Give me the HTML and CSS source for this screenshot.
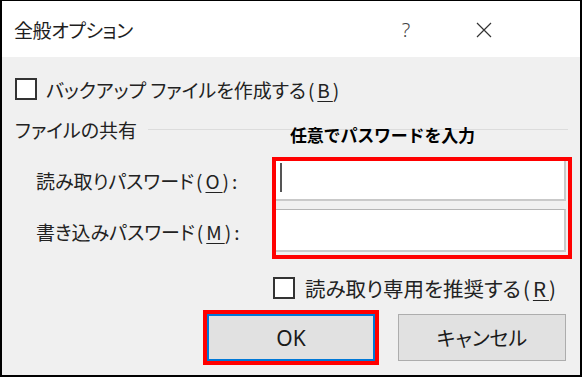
FILE: index.html
```html
<!DOCTYPE html>
<html lang="ja">
<head>
<meta charset="utf-8">
<link rel="stylesheet" href="styles.css">
</head>
<body>
<div class="dialog">
  <div class="titlebar">
    <span class="title">全般オプション</span>
    <span class="help">?</span>
    <span class="close">
      <svg width="16" height="16" viewBox="0 0 16 16"><path d="M1 1 L15 15 M15 1 L1 15" stroke="#333" stroke-width="1.2" fill="none"/></svg>
    </span>
  </div>
  <div class="content">
    <div class="check-row first">
      <span class="checkbox"></span>
      <span class="label">バックアップ ファイルを作成する<span class="key">(<u>B</u>)</span></span>
    </div>
    <div class="group-row">
      <span class="group-title">ファイルの共有</span>
      <span class="group-line"></span>
    </div>
    <div class="note">任意でパスワードを入力</div>
    <div class="pw-grid">
      <div class="pw-labels">
        <div class="pw-label one">読み取りパスワード<span class="key">(<u>O</u>):</span></div>
        <div class="pw-label two">書き込みパスワード<span class="key">(<u>M</u>):</span></div>
      </div>
      <div class="red-box">
        <div class="input one"><span class="caret"></span></div>
        <div class="input two"></div>
      </div>
    </div>
    <div class="check-row second">
      <span class="checkbox"></span>
      <span class="label">読み取り専用を推奨する<span class="key">(<u>R</u>)</span></span>
    </div>
    <div class="buttons">
      <div class="red-wrap"><div class="btn ok">OK</div></div>
      <div class="btn cancel">キャンセル</div>
    </div>
  </div>
</div>
</body>
</html>
```
FILE: styles.css
```css
* { box-sizing: border-box; }
html, body { margin: 0; padding: 0; }
body {
  width: 582px;
  height: 377px;
  overflow: hidden;
  font-family: "Noto Sans CJK JP", "Noto Sans", sans-serif;
  font-feature-settings: "palt";
  color: #222;
}
.dialog {
  width: 582px;
  height: 377px;
  border-left: 2px solid #000;
  border-top: 1px solid #000;
  border-right: 2px solid #000;
  border-bottom: 2px solid #000;
  display: flex;
  flex-direction: column;
  position: relative;
}
.titlebar {
  height: 56px;
  background: #fff;
  display: flex;
  align-items: center;
  padding-left: 12px;
  padding-right: 83px;
  flex-shrink: 0;
}
.title {
  font-size: 19px;
  flex: 1;
  color: #1e1e1e;
  letter-spacing: -0.4px;
}
.help {
  width: 22px;
  text-align: center;
  font-family: "Noto Sans", sans-serif;
  font-size: 20px;
  color: #444;
  margin-right: 53px;
  font-weight: 300;
}
.close {
  width: 27px;
  display: flex;
  justify-content: center;
  padding-top: 2px;
}
.content {
  flex: 1;
  background: #f0f0f0;
  padding-left: 13px;
}
.check-row {
  display: flex;
  align-items: center;
  height: 22px;
  font-size: 19px;
}
.check-row.first { margin-top: 21px; }
.check-row.first .checkbox { margin-right: 9px; }
.check-row.second { margin-top: 18px; margin-left: 258px; }
.check-row.second .checkbox { margin-right: 10px; }
.check-row.second .label { font-size: 20.5px; }
.checkbox {
  width: 22px;
  height: 22px;
  border: 2px solid #333;
  background: #fff;
  flex-shrink: 0;
}
.key { letter-spacing: 3px; margin-left: 2px; }
u { text-decoration-thickness: 1px; text-underline-offset: 3px; }
.group-row {
  display: flex;
  align-items: center;
  height: 22px;
  margin-top: 18px;
  font-size: 19px;
}
.group-line {
  flex: 1;
  height: 1px;
  background: #dcdcdc;
  margin-left: 11px;
  margin-right: 12px;
}
.note {
  position: absolute;
  left: 288px;
  top: 121px;
  font-size: 17px;
  font-weight: 700;
  color: #000;
  font-feature-settings: normal;
  letter-spacing: -0.2px;
}
.pw-grid {
  display: grid;
  grid-template-columns: 257px 300px;
  margin-top: 17px;
}
.pw-labels {
  display: flex;
  flex-direction: column;
  padding-top: 3px;
  padding-left: 21px;
  font-size: 19px;
}
.pw-label { display: flex; align-items: center; }
.pw-label.one { height: 40px; }
.pw-label.two { height: 43px; margin-top: 10px; }
.red-box {
  border: 4px solid #ff0000;
  padding: 0 2px 3px 0;
}
.input {
  background: #fff;
  width: 290px;
  border-right: 2px solid #c9c9c9;
  border-bottom: 2px solid #c9c9c9;
}
.input.one { height: 40px; position: relative; }
.input.two { height: 43px; margin-top: 8px; border-top: 1px solid #b5b5b5; }
.caret {
  position: absolute;
  left: 4px;
  top: 2px;
  width: 2px;
  height: 29px;
  background: #555;
}
.buttons {
  display: flex;
  align-items: center;
  margin-top: 11px;
  margin-left: 188px;
}
.red-wrap {
  border: 4px solid #ff0000;
}
.btn {
  width: 168px;
  height: 47px;
  background: #e1e1e1;
  display: flex;
  align-items: center;
  justify-content: center;
  font-size: 20px;
  color: #1a1a1a;
}
.btn.ok {
  border: 2px solid #0078d7;
  font-family: "Noto Sans", sans-serif;
  font-size: 21px;
}
.btn.cancel {
  border: 1px solid #adadad;
  margin-left: 19px;
}
```
